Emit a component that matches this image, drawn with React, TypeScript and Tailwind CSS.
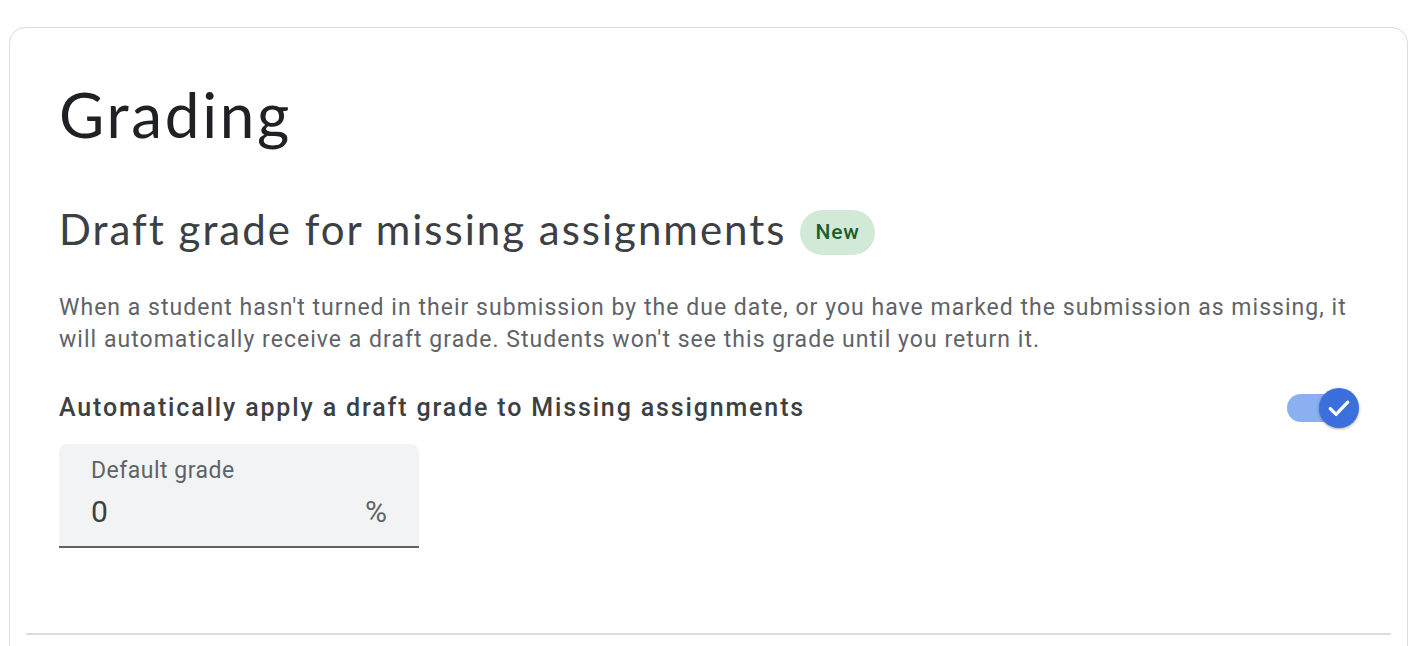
export default function App() {
  return (
    <div className="h-[646px] w-[1420px] overflow-hidden bg-white pl-[9px] pr-[12px] pt-[27px]" style={{ fontFamily: 'Roboto, "Liberation Sans", sans-serif' }}>
      <div className="h-[660px] rounded-t-[16px] border border-[#dadce0] px-[16px]">
        <div className="px-[33px] pt-[46px]">
          <h1 className="font-['Lato',sans-serif] text-[62px] leading-[80px] tracking-[2.7px] text-[#202124]">Grading</h1>

          <div className="mt-[49px] flex h-[52px] items-center gap-[14px]">
            <h2 className="font-['Lato',sans-serif] text-[42px] leading-[52px] tracking-[2px] text-[#3c4043]">
              Draft grade for missing assignments
            </h2>
            <span className="mt-[6px] rounded-full bg-[#d3e9d7] px-[15px] py-[9px] text-[21px] font-medium leading-[27px] tracking-[0.8px] text-[#1e5d2e]">
              New
            </span>
          </div>

          <p className="mt-[37px] text-[23px] leading-[32px] tracking-[1.03px] text-[#5f6368]">
            When a student hasn't turned in their submission by the due date, or you have marked the submission as missing, it
            <br />
            will automatically receive a draft grade. Students won't see this grade until you return it.
          </p>

          <div className="mt-[37px] flex h-[30px] items-center justify-between">
            <span className="whitespace-nowrap text-[25px] font-medium leading-[30px] tracking-[1.85px] text-[#3c4043]">
              Automatically apply a draft grade to Missing assignments
            </span>
            <div className="relative mr-[11px] mt-[-1px] h-[28px] w-[60px]">
              <div className="absolute inset-0 rounded-full bg-[#8ab0f1]" />
              <div className="absolute right-[-12px] top-[-6px] flex h-[40px] w-[40px] items-center justify-center rounded-full bg-[#3a6fdc] shadow-[0_1px_3px_rgba(0,0,0,0.35)]">
                <svg width="28" height="28" viewBox="0 0 24 24" fill="none">
                  <path d="M4.5 12.5l5 5 10-10.5" stroke="white" strokeWidth="2.8" strokeLinecap="round" strokeLinejoin="round" />
                </svg>
              </div>
            </div>
          </div>

          <div className="mt-[21px] h-[104px] w-[360px] rounded-t-[8px] border-b-2 border-[#5f6368] bg-[#f1f3f4] px-[32px] pt-[12px]">
            <div className="text-[23px] leading-[30px] tracking-[0.5px] text-[#5f6368]">Default grade</div>
            <div className="mt-[8px] flex items-center justify-between text-[30px] leading-[36px] text-[#3c4043]">
              <span>0</span>
              <span className="text-[#5f6368]">%</span>
            </div>
          </div>
        </div>

        <div className="mt-[85px] h-[2px] bg-[#dadce0]" />
      </div>
    </div>
  );
}
